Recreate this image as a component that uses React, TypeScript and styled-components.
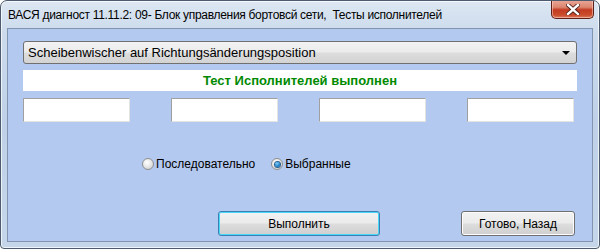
import * as React from 'react';
import styled, { createGlobalStyle } from 'styled-components';

const GlobalStyle = createGlobalStyle`
  html, body {
    margin: 0;
    padding: 0;
    background: #ffffff;
  }
  body {
    font-family: "Liberation Sans", Arial, sans-serif;
  }
`;

const uiFont = `"Liberation Sans", Arial, sans-serif`;

const Window = styled.div`
  box-sizing: border-box;
  width: 600px;
  height: 249px;
  display: flex;
  flex-direction: column;
  border: 1px solid #4d5b6e;
  border-radius: 7px 7px 4px 4px;
  background: linear-gradient(to bottom, #dde7f3 0px, #cddbec 30px, #bfd1e8 120px, #c6d6ea 249px);
  box-shadow: inset 0 0 0 1px rgba(255, 255, 255, 0.7);
  overflow: hidden;
`;

const TitleBar = styled.div`
  height: 27px;
  display: flex;
  align-items: flex-start;
  padding-left: 7px;
`;

const Title = styled.div`
  font-family: "Liberation Sans", Arial, sans-serif;
  font-size: 12px;
  color: #000;
  line-height: 14px;
  margin-top: 7px;
  white-space: pre;
  letter-spacing: -0.3px;
`;

const CloseButton = styled.div`
  margin-left: auto;
  margin-right: 5px;
  margin-top: -1px;
  width: 43px;
  height: 19px;
  box-sizing: border-box;
  border: 1px solid #5e2016;
  border-top: none;
  border-radius: 0 0 5px 5px;
  background: linear-gradient(to bottom, #eaa898 0%, #dc8670 40%, #c23a20 55%, #cc4e2e 85%, #de8064 100%);
  box-shadow: inset 0 0 0 1px rgba(255, 220, 210, 0.5);
  display: flex;
  align-items: center;
  justify-content: center;
`;

const Client = styled.div`
  flex: 1;
  margin: 0 6px 6px 6px;
  border: 1px solid #8194b0;
  background: #b4c9ef;
  display: flex;
  flex-direction: column;
  padding: 12px 15px 0 15px;
`;

const Combo = styled.div`
  box-sizing: border-box;
  height: 23px;
  border: 1px solid #707070;
  border-radius: 3px;
  background: linear-gradient(to bottom, #f3f3f3 0%, #ebebeb 48%, #dddddd 52%, #d3d3d3 100%);
  display: flex;
  align-items: center;
  padding: 0 6px 0 4px;
  font-family: ${uiFont};
  font-size: 13px;
  color: #000;
`;

const Arrow = styled.div`
  margin-left: auto;
  width: 0;
  height: 0;
  border-left: 4px solid transparent;
  border-right: 4px solid transparent;
  border-top: 4px solid #000;
  margin-top: 1px;
`;

const Status = styled.div`
  margin-top: 6px;
  height: 21px;
  background: #fff;
  display: flex;
  align-items: center;
  justify-content: center;
  font-family: ${uiFont};
  font-size: 13px;
  font-weight: bold;
  color: #008a00;
`;

const Fields = styled.div`
  margin-top: 7px;
  padding-right: 3px;
  display: flex;
  justify-content: space-between;
`;

const Field = styled.div`
  box-sizing: border-box;
  width: 107px;
  height: 24px;
  background: #fff;
  border-top: 1px solid #a0a0a0;
  border-left: 1px solid #a0a0a0;
  border-right: 1px solid #e3e3e3;
  border-bottom: 1px solid #e3e3e3;
`;

const Options = styled.div`
  margin-top: 34px;
  height: 16px;
  display: flex;
  align-items: center;
  padding-left: 119px;
  gap: 16px;
`;

const Option = styled.label`
  display: flex;
  align-items: center;
  gap: 2px;
  font-family: ${uiFont};
  font-size: 12px;
  color: #000;
`;

const RadioDot = styled.span<{ $checked?: boolean }>`
  box-sizing: border-box;
  width: 12px;
  height: 12px;
  border-radius: 50%;
  border: 1px solid #8e8f8f;
  background: radial-gradient(circle at 40% 35%, #ffffff 0%, #e6e6e6 50%, #c8c8c8 100%);
  display: flex;
  align-items: center;
  justify-content: center;

  &::after {
    content: '';
    display: ${p => (p.$checked ? 'block' : 'none')};
    width: 5px;
    height: 5px;
    border-radius: 50%;
    background: radial-gradient(circle at 40% 35%, #7fd0ff 0%, #1a7dc4 60%, #0d4f8a 100%);
    box-shadow: 0 0 0 1px #2b5f8f;
  }
`;

const Actions = styled.div`
  margin-top: 39px;
  display: flex;
  padding-left: 195px;
  gap: 81px;
`;

const Button = styled.button<{ $width: number; $focused?: boolean }>`
  box-sizing: border-box;
  width: ${p => p.$width}px;
  height: 25px;
  padding: 0;
  border: 1px solid ${p => (p.$focused ? '#3c7fb1' : '#707070')};
  border-radius: 3px;
  background: linear-gradient(to bottom, #f2f2f2 0%, #ebebeb 48%, #dddddd 52%, #cfcfcf 100%);
  box-shadow: inset 0 0 0 1px ${p => (p.$focused ? '#48d8fb' : '#fcfcfc')};
  font-family: ${uiFont};
  font-size: 12px;
  color: #000;
`;

const CloseGlyph = () => (
  <svg width="14" height="11" viewBox="0 0 14 11">
    <path
      d="M2 1 L7 5.5 L12 1 M2 10 L7 5.5 L12 10"
      stroke="#4a1a12"
      strokeWidth="4.2"
      fill="none"
      strokeLinecap="square"
    />
    <path
      d="M2 1 L7 5.5 L12 1 M2 10 L7 5.5 L12 10"
      stroke="#ffffff"
      strokeWidth="2.4"
      fill="none"
      strokeLinecap="square"
    />
  </svg>
);

export default function App() {
  return (
    <>
      <GlobalStyle />
      <Window>
        <TitleBar>
          <Title>ВАСЯ диагност 11.11.2: 09- Блок управления бортовсй сети,  Тесты исполнителей</Title>
          <CloseButton>
            <CloseGlyph />
          </CloseButton>
        </TitleBar>
        <Client>
          <Combo>
            Scheibenwischer auf Richtungsänderungsposition
            <Arrow />
          </Combo>
          <Status>Тест Исполнителей выполнен</Status>
          <Fields>
            <Field />
            <Field />
            <Field />
            <Field />
          </Fields>
          <Options>
            <Option>
              <RadioDot />
              Последовательно
            </Option>
            <Option>
              <RadioDot $checked />
              Выбранные
            </Option>
          </Options>
          <Actions>
            <Button $width={162} $focused>
              Выполнить
            </Button>
            <Button $width={114}>Готово, Назад</Button>
          </Actions>
        </Client>
      </Window>
    </>
  );
}
